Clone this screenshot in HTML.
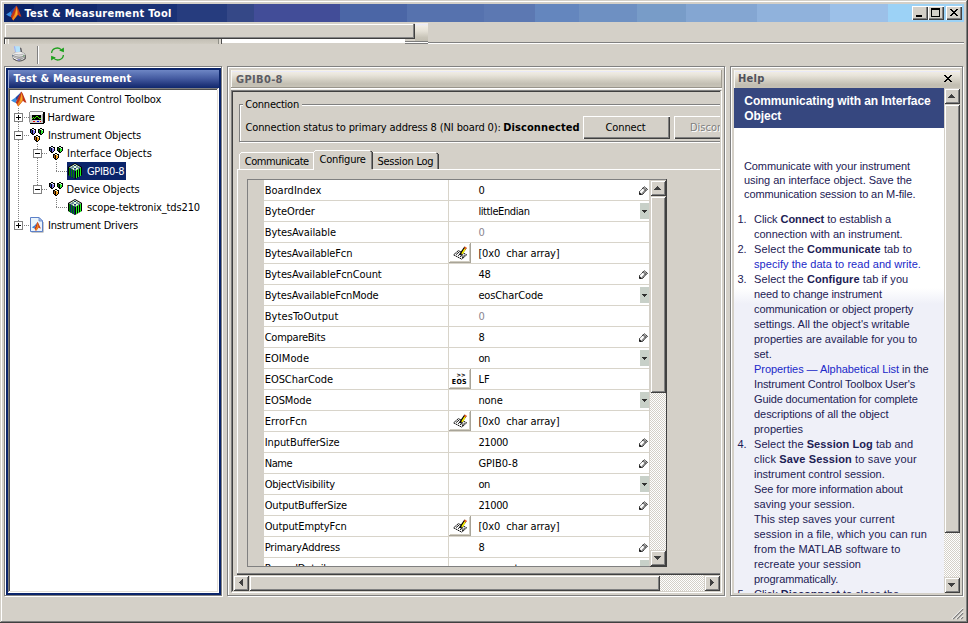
<!DOCTYPE html>
<html><head><meta charset="utf-8"><title>Test &amp; Measurement Tool</title>
<style>
html,body{margin:0;padding:0}
body{width:968px;height:623px;overflow:hidden;background:#d4d0c8;position:relative;font-family:'DejaVu Sans Condensed','Liberation Sans',sans-serif;font-size:11px}
#w{position:absolute;left:0;top:0;width:968px;height:623px;overflow:hidden}
#w div,#w svg{position:absolute;box-sizing:content-box}
#w svg{overflow:visible}
.t{white-space:nowrap}
.t b{font-weight:bold}
</style></head>
<body><div id="w">
<div style="left:0px;top:0px;width:968px;height:623px;background:#d4d0c8;"></div>
<div style="left:1px;top:1px;width:965px;height:1px;background:#ffffff;"></div>
<div style="left:1px;top:1px;width:1px;height:620px;background:#ffffff;"></div>
<div style="left:966px;top:1px;width:1px;height:621px;background:#808080;"></div>
<div style="left:1px;top:621px;width:966px;height:1px;background:#808080;"></div>
<div style="left:967px;top:0px;width:1px;height:623px;background:#404040;"></div>
<div style="left:0px;top:622px;width:968px;height:1px;background:#404040;"></div>
<div style="left:4px;top:4px;width:30px;height:18px;background:#0c2468;"></div>
<div style="left:34px;top:4px;width:63px;height:18px;background:#122a6e;"></div>
<div style="left:97px;top:4px;width:80px;height:18px;background:#1a3276;"></div>
<div style="left:177px;top:4px;width:50px;height:18px;background:#263c7e;"></div>
<div style="left:227px;top:4px;width:27px;height:18px;background:#354887;"></div>
<div style="left:254px;top:4px;width:86px;height:18px;background:#424d98;"></div>
<div style="left:340px;top:4px;width:67px;height:18px;background:#4b66a6;"></div>
<div style="left:407px;top:4px;width:77px;height:18px;background:#5672ae;"></div>
<div style="left:484px;top:4px;width:51px;height:18px;background:#5c78b2;"></div>
<div style="left:535px;top:4px;width:44px;height:18px;background:#6486be;"></div>
<div style="left:579px;top:4px;width:58px;height:18px;background:#6e90c2;"></div>
<div style="left:637px;top:4px;width:49px;height:18px;background:#789cc8;"></div>
<div style="left:686px;top:4px;width:71px;height:18px;background:#84a6d2;"></div>
<div style="left:757px;top:4px;width:73px;height:18px;background:#90b2dc;"></div>
<div style="left:830px;top:4px;width:58px;height:18px;background:#9cc0e8;"></div>
<div style="left:888px;top:4px;width:76px;height:18px;background:#9cd2f6;"></div>
<svg style="left:6px;top:5px" width="16.0" height="16.0" viewBox="0 0 16 16">
<polygon points="0.1,9.4 4.6,6.6 8.6,2.8 10.3,0.8 7.4,7.0 5.8,9.6 4.9,12.0 2.6,11.0" fill="#3a8ee0"/>
<polygon points="4.6,6.6 8.6,2.8 10.3,0.8 7.6,6.6 5.8,9.2" fill="#2c44a0"/>
<polygon points="10.4,0.4 11.7,2.6 15.5,11.7 13.5,11.2 12.0,9.8 9.7,12.6 7.2,15.6 6.0,13.6 4.8,11.6 6.2,8.6 8.2,4.6" fill="#c0341c"/>
<polygon points="10.6,1.2 11.5,5.5 11.8,9.6 9.5,12.6 7.2,15.4 6.2,13.4 8.5,9.6 9.7,5.5" fill="#f08a1c"/>
<polygon points="10.7,3 11.2,6.5 11.0,9.2 8.9,12.2 9.9,8" fill="#f8b030"/>
</svg>
<div class="t" style="left:24.40px;top:6.11px;font-size:11px;line-height:16px;color:#fff;font-weight:bold;letter-spacing:0.300px;font-family:'DejaVu Sans Condensed', 'Liberation Sans', sans-serif;">Test &amp; Measurement Tool</div>
<div style="left:912px;top:6px;width:16px;height:14px;background:#d4d0c8;box-shadow:inset 1px 1px 0 #ffffff,inset -1px -1px 0 #404040,inset -2px -2px 0 #808080"></div>
<div style="left:928px;top:6px;width:16px;height:14px;background:#d4d0c8;box-shadow:inset 1px 1px 0 #ffffff,inset -1px -1px 0 #404040,inset -2px -2px 0 #808080"></div>
<div style="left:946px;top:6px;width:16px;height:14px;background:#d4d0c8;box-shadow:inset 1px 1px 0 #ffffff,inset -1px -1px 0 #404040,inset -2px -2px 0 #808080"></div>
<div style="left:916px;top:15px;width:6px;height:2px;background:#000;"></div>
<div style="left:931px;top:8px;width:7px;height:6px;border:1px solid #000;border-top:2px solid #000"></div>
<svg style="left:950px;top:9px" width="8" height="7" viewBox="0 0 8 7" shape-rendering="crispEdges"><path d="M0,0h2v1h1v1h2v-1h1v-1h2v1h-1v1h-1v1h-1v1h1v1h1v1h1v1h-2v-1h-1v-1h-2v1h-1v1h-2v-1h1v-1h1v-1h1v-1h-1v-1h-1v-1h-1z" fill="#000"/></svg>
<div style="left:5px;top:24px;width:408px;height:1px;background:#ffffff;"></div>
<div style="left:5px;top:24px;width:1px;height:13px;background:#ffffff;"></div>
<div style="left:413px;top:24px;width:1px;height:14px;background:#808080;"></div>
<div style="left:414px;top:24px;width:1px;height:15px;background:#404040;"></div>
<div style="left:4px;top:37px;width:410px;height:1px;background:#868686;"></div>
<div style="left:4px;top:38px;width:411px;height:1px;background:#404040;"></div>
<div style="left:415px;top:23px;width:13px;height:18px;background:;background:linear-gradient(#f6f0e2 0,#eaeaf6 8%,#f0ece4 16%,#e4e0d6 45%,#c8c4b8 80%,#c2beb2 100%)"></div>
<div style="left:4px;top:39px;width:1px;height:5px;background:#404040;"></div>
<div style="left:5px;top:39px;width:1px;height:5px;background:#ffffff;"></div>
<div style="left:8px;top:39px;width:1px;height:5px;background:#f4f2ee;"></div>
<div style="left:9px;top:39px;width:209px;height:5px;background:;background:linear-gradient(#c2beb4,#d0ccc2)"></div>
<div style="left:218px;top:39px;width:1px;height:5px;background:#909088;"></div>
<div style="left:219px;top:39px;width:2px;height:5px;background:#dcd8d0;"></div>
<div style="left:221px;top:39px;width:1px;height:5px;background:#505050;"></div>
<div style="left:222px;top:39px;width:183px;height:4px;background:#ffffff;"></div>
<div style="left:405px;top:41px;width:23px;height:1px;background:#7c7c7c;"></div>
<div style="left:405px;top:42px;width:23px;height:1px;background:#ffffff;"></div>
<div style="left:405px;top:43px;width:23px;height:1px;background:#7c7c7c;"></div>
<div style="left:428px;top:42px;width:536px;height:1px;background:#808080;"></div>
<div style="left:428px;top:43px;width:536px;height:1px;background:#ffffff;"></div>
<svg style="left:12px;top:46px" width="15" height="16" viewBox="0 0 15 16">
<polygon points="8,1.2 9.4,2.4 10.2,6.4 8.6,6.6" fill="#505058"/>
<polygon points="1.8,0.2 7.6,0.2 8.4,5.8 3.2,6.2" fill="#b4e2fc"/>
<polygon points="1.8,0.2 3,0.2 4,6.1 3.2,6.2" fill="#a4acec"/>
<path d="M0.4,9.2 Q0.6,6.6 3,6.2 L9.4,5.8 Q13.4,7 13.8,9.4 L13.8,12.2 Q7.4,17.6 0.4,12.2z" fill="#8c8c8c"/>
<path d="M0.6,8.8 Q1,6.8 3,6.4 L9.2,6 Q12.8,7.2 13,9 Q7.4,12.6 0.6,8.8z" fill="#e2e2e2"/>
<path d="M2.2,8.2 Q7,9.8 11.6,8.2" fill="none" stroke="#a8a8a8" stroke-width="0.8"/>
<path d="M3.4,7.2 L9.6,6.9" fill="none" stroke="#fafafa" stroke-width="0.9"/>
<path d="M0.7,9.6 Q7.4,13.6 12.8,9.8 L12.8,10.8 Q7.4,14.6 0.7,10.6z" fill="#c8c8c8"/>
<path d="M0.9,11 L6.2,13.6 L6.2,14.8 L0.9,12.2z" fill="#f8f8f8"/>
<path d="M8.2,14.2 L12.4,11.6 L12.4,12.6 L8.2,15z" fill="#e4e4e4"/>
<path d="M12.9,9 L13.9,9.6 L13.9,12.4 L12.9,13.2z" fill="#606060"/>
<path d="M1,12.6 Q7.4,17.6 13.4,12.8" fill="none" stroke="#505050" stroke-width="1"/>
<rect x="5.6" y="13.2" width="2.2" height="1.4" fill="#8484d8"/>
<rect x="0.3" y="9.2" width="1" height="1.2" fill="#406080"/>
<rect x="11.2" y="9.4" width="1" height="1" fill="#40a040"/>
</svg>
<div style="left:37px;top:46px;width:1px;height:18px;background:#808080;"></div>
<div style="left:38px;top:46px;width:1px;height:18px;background:#ffffff;"></div>
<svg style="left:50px;top:47px" width="15" height="14" viewBox="0 0 15 14">
<path d="M1.6,6.0 A5.6,5.2 0 0 1 11.2,2.6" fill="none" stroke="#1ea01e" stroke-width="1.3"/>
<polygon points="9.2,3.6 13.9,0.6 13.9,5.3" fill="#1aa01a"/>
<path d="M13.4,8.0 A5.6,5.2 0 0 1 3.8,11.4" fill="none" stroke="#1ea01e" stroke-width="1.3"/>
<polygon points="5.8,10.4 1.1,13.4 1.1,8.7" fill="#1aa01a"/>
</svg>
<div style="left:5px;top:67px;width:216px;height:528px;border:1px solid #ffffff"></div>
<div style="left:4px;top:66px;width:216px;height:528px;border:1px solid #808080"></div>
<div style="left:6px;top:68px;width:215px;height:527px;background:#0a246a;"></div>
<div style="left:8px;top:70px;width:211px;height:18px;background:;background:linear-gradient(#6e86c4 0,#5a72b4 22%,#42589e 50%,#24397e 80%,#10286e 100%)"></div>
<div style="left:8px;top:70px;width:1px;height:18px;background:#9aaad4;"></div>
<div class="t" style="left:13.60px;top:71.11px;font-size:11px;line-height:16px;color:#fff;font-weight:bold;letter-spacing:0.171px;font-family:'DejaVu Sans Condensed', 'Liberation Sans', sans-serif;">Test &amp; Measurement</div>
<div style="left:8px;top:88px;width:211px;height:505px;background:#ffffff;"></div>
<div style="left:8px;top:88px;width:210px;height:1px;background:#808080;"></div>
<div style="left:8px;top:88px;width:1px;height:504px;background:#808080;"></div>
<div style="left:9px;top:89px;width:208px;height:1px;background:#505050;"></div>
<div style="left:9px;top:89px;width:1px;height:502px;background:#505050;"></div>
<div style="left:10px;top:591px;width:208px;height:1px;background:#e4e0d8;"></div>
<div style="left:217px;top:90px;width:1px;height:502px;background:#e4e0d8;"></div>
<div style="left:18px;top:108px;width:1px;height:113px;background-image:linear-gradient(#808080 50%,transparent 0);background-size:1px 2px"></div>
<div style="left:37px;top:144px;width:1px;height:41px;background-image:linear-gradient(#808080 50%,transparent 0);background-size:1px 2px"></div>
<div style="left:56px;top:162px;width:1px;height:10px;background-image:linear-gradient(#808080 50%,transparent 0);background-size:1px 2px"></div>
<div style="left:56px;top:198px;width:1px;height:10px;background-image:linear-gradient(#808080 50%,transparent 0);background-size:1px 2px"></div>
<svg style="left:10.5px;top:90.8px" width="16.0" height="16.0" viewBox="0 0 16 16">
<polygon points="0.1,9.4 4.6,6.6 8.6,2.8 10.3,0.8 7.4,7.0 5.8,9.6 4.9,12.0 2.6,11.0" fill="#3a8ee0"/>
<polygon points="4.6,6.6 8.6,2.8 10.3,0.8 7.6,6.6 5.8,9.2" fill="#2c44a0"/>
<polygon points="10.4,0.4 11.7,2.6 15.5,11.7 13.5,11.2 12.0,9.8 9.7,12.6 7.2,15.6 6.0,13.6 4.8,11.6 6.2,8.6 8.2,4.6" fill="#c0341c"/>
<polygon points="10.6,1.2 11.5,5.5 11.8,9.6 9.5,12.6 7.2,15.4 6.2,13.4 8.5,9.6 9.7,5.5" fill="#f08a1c"/>
<polygon points="10.7,3 11.2,6.5 11.0,9.2 8.9,12.2 9.9,8" fill="#f8b030"/>
</svg>
<div class="t" style="left:29.50px;top:92.11px;font-size:11px;line-height:16px;color:#000;letter-spacing:-0.060px;font-family:'DejaVu Sans Condensed', 'Liberation Sans', sans-serif;">Instrument Control Toolbox</div>
<div style="left:24px;top:117px;width:5px;height:1px;background-image:linear-gradient(90deg,#808080 50%,transparent 0);background-size:2px 1px"></div>
<div style="left:14px;top:113px;width:7px;height:7px;border:1px solid #808080;background:#fff"></div>
<div style="left:16px;top:117px;width:5px;height:1px;background:#000;"></div>
<div style="left:18px;top:115px;width:1px;height:5px;background:#000;"></div>
<svg style="left:29px;top:111px" width="16" height="13" viewBox="0 0 16 13" shape-rendering="crispEdges">
<rect x="1" y="0" width="13" height="1" fill="#909090"/>
<rect x="0" y="1" width="14" height="11" fill="#d0d0d0"/>
<rect x="0" y="1" width="1" height="10" fill="#909090"/>
<rect x="1" y="1" width="13" height="3" fill="#f8f8f8"/>
<rect x="14" y="1" width="2" height="11" fill="#000"/>
<rect x="1" y="12" width="14" height="1" fill="#000"/>
<rect x="13" y="3" width="1" height="8" fill="#a8a8a8"/>
<rect x="3" y="4" width="9" height="5" fill="#000"/>
<rect x="3" y="7" width="1" height="1" fill="#40f000"/><rect x="4" y="6" width="1" height="1" fill="#40f000"/><rect x="5" y="7" width="1" height="1" fill="#40f000"/><rect x="6" y="6" width="1" height="1" fill="#40f000"/><rect x="7" y="5" width="1" height="1" fill="#40f000"/><rect x="8" y="5" width="1" height="1" fill="#40f000"/><rect x="9" y="6" width="1" height="1" fill="#40f000"/><rect x="10" y="7" width="2" height="1" fill="#40f000"/>
<rect x="4" y="10" width="2" height="1" fill="#f00000"/>
<rect x="8" y="10" width="2" height="1" fill="#0000f0"/>
<rect x="11" y="10" width="1" height="1" fill="#f00000"/>
</svg>
<div class="t" style="left:47.50px;top:110.11px;font-size:11px;line-height:16px;color:#000;letter-spacing:-0.071px;font-family:'DejaVu Sans Condensed', 'Liberation Sans', sans-serif;">Hardware</div>
<div style="left:24px;top:135px;width:5px;height:1px;background-image:linear-gradient(90deg,#808080 50%,transparent 0);background-size:2px 1px"></div>
<div style="left:14px;top:131px;width:7px;height:7px;border:1px solid #808080;background:#fff"></div>
<div style="left:16px;top:135px;width:5px;height:1px;background:#000;"></div>
<svg style="left:30px;top:128px" width="14" height="14" viewBox="0 0 14 14" shape-rendering="crispEdges"><polygon points="2,0 4,0 4,1 6,1 6,5 5,5 5,6 4,6 4,7 2,7 2,6 1,6 1,5 0,5 0,1 2,1" fill="#000"/><rect x="2" y="1" width="2" height="1" fill="#e0e8ff"/><rect x="1" y="2" width="1" height="3" fill="#2848a0"/><rect x="3" y="2" width="2" height="2" fill="#8878f0"/><rect x="3" y="4" width="1.5" height="1" fill="#8878f0"/><rect x="3" y="5" width="1" height="1" fill="#8878f0"/><rect x="4" y="2" width="1" height="1" fill="#e0e8ff"/><polygon points="10,0 12,0 12,1 14,1 14,5 13,5 13,6 12,6 12,7 10,7 10,6 9,6 9,5 8,5 8,1 10,1" fill="#000"/><rect x="10" y="1" width="2" height="1" fill="#d8ffd8"/><rect x="9" y="2" width="1" height="3" fill="#087808"/><rect x="11" y="2" width="2" height="2" fill="#30e830"/><rect x="11" y="4" width="1.5" height="1" fill="#30e830"/><rect x="11" y="5" width="1" height="1" fill="#30e830"/><rect x="12" y="2" width="1" height="1" fill="#d8ffd8"/><polygon points="6,7 8,7 8,8 10,8 10,12 9,12 9,13 8,13 8,14 6,14 6,13 5,13 5,12 4,12 4,8 6,8" fill="#000"/><rect x="6" y="8" width="2" height="1" fill="#fff8c0"/><rect x="5" y="9" width="1" height="3" fill="#b06010"/><rect x="7" y="9" width="2" height="2" fill="#f8a020"/><rect x="7" y="11" width="1.5" height="1" fill="#f8a020"/><rect x="7" y="12" width="1" height="1" fill="#f8a020"/><rect x="8" y="9" width="1" height="1" fill="#fff8c0"/></svg>
<div class="t" style="left:48.00px;top:128.11px;font-size:11px;line-height:16px;color:#000;letter-spacing:-0.106px;font-family:'DejaVu Sans Condensed', 'Liberation Sans', sans-serif;">Instrument Objects</div>
<div style="left:42px;top:153px;width:6px;height:1px;background-image:linear-gradient(90deg,#808080 50%,transparent 0);background-size:2px 1px"></div>
<div style="left:33px;top:149px;width:7px;height:7px;border:1px solid #808080;background:#fff"></div>
<div style="left:35px;top:153px;width:5px;height:1px;background:#000;"></div>
<svg style="left:49px;top:146px" width="14" height="14" viewBox="0 0 14 14" shape-rendering="crispEdges"><polygon points="2,0 4,0 4,1 6,1 6,5 5,5 5,6 4,6 4,7 2,7 2,6 1,6 1,5 0,5 0,1 2,1" fill="#000"/><rect x="2" y="1" width="2" height="1" fill="#e0e8ff"/><rect x="1" y="2" width="1" height="3" fill="#2848a0"/><rect x="3" y="2" width="2" height="2" fill="#8878f0"/><rect x="3" y="4" width="1.5" height="1" fill="#8878f0"/><rect x="3" y="5" width="1" height="1" fill="#8878f0"/><rect x="4" y="2" width="1" height="1" fill="#e0e8ff"/><polygon points="10,0 12,0 12,1 14,1 14,5 13,5 13,6 12,6 12,7 10,7 10,6 9,6 9,5 8,5 8,1 10,1" fill="#000"/><rect x="10" y="1" width="2" height="1" fill="#d8ffd8"/><rect x="9" y="2" width="1" height="3" fill="#087808"/><rect x="11" y="2" width="2" height="2" fill="#30e830"/><rect x="11" y="4" width="1.5" height="1" fill="#30e830"/><rect x="11" y="5" width="1" height="1" fill="#30e830"/><rect x="12" y="2" width="1" height="1" fill="#d8ffd8"/><polygon points="6,7 8,7 8,8 10,8 10,12 9,12 9,13 8,13 8,14 6,14 6,13 5,13 5,12 4,12 4,8 6,8" fill="#000"/><rect x="6" y="8" width="2" height="1" fill="#fff8c0"/><rect x="5" y="9" width="1" height="3" fill="#b06010"/><rect x="7" y="9" width="2" height="2" fill="#f8a020"/><rect x="7" y="11" width="1.5" height="1" fill="#f8a020"/><rect x="7" y="12" width="1" height="1" fill="#f8a020"/><rect x="8" y="9" width="1" height="1" fill="#fff8c0"/></svg>
<div class="t" style="left:67.00px;top:146.11px;font-size:11px;line-height:16px;color:#000;font-family:'DejaVu Sans Condensed', 'Liberation Sans', sans-serif;">Interface Objects</div>
<div style="left:56px;top:171px;width:11px;height:1px;background-image:linear-gradient(90deg,#808080 50%,transparent 0);background-size:2px 1px"></div>
<div style="left:67px;top:162px;width:59px;height:18px;background:#0a246a;"></div>
<svg style="left:68px;top:163px" width="14" height="16" viewBox="0 0 14 16"><polygon points="7,0 14,4 14,12 7,16 0,12 0,4" fill="#000"/><polygon points="7,1 13,4.5 7,8 1,4.5" fill="#e4ffd8"/><rect x="6" y="2" width="2" height="1" fill="#103070"/><rect x="4" y="3.5" width="2" height="1" fill="#103070"/><rect x="8" y="3.5" width="2" height="1" fill="#103070"/><rect x="6" y="5" width="2" height="1" fill="#103070"/><rect x="2.5" y="4.5" width="2" height="1" fill="#103070"/><rect x="10" y="4.5" width="2" height="1" fill="#103070"/><rect x="6" y="6.5" width="2" height="1" fill="#103070"/><rect x="1" y="5" width="1" height="8" fill="#008000"/><rect x="3" y="6" width="1" height="8" fill="#008000"/><rect x="5" y="7" width="1" height="8" fill="#008000"/><rect x="8" y="7" width="1" height="8" fill="#20f020"/><rect x="10" y="6" width="1" height="8" fill="#20f020"/><rect x="12" y="5" width="1" height="8" fill="#20f020"/><rect x="2" y="5.5" width="1" height="8" fill="#0a246a"/><rect x="4" y="6.5" width="1" height="8" fill="#0a246a"/><rect x="6" y="7.5" width="1" height="8" fill="#0a246a"/></svg>
<div class="t" style="left:87.00px;top:164.11px;font-size:11px;line-height:16px;color:#fff;letter-spacing:-0.333px;font-family:'DejaVu Sans Condensed', 'Liberation Sans', sans-serif;">GPIB0-8</div>
<div style="left:42px;top:189px;width:6px;height:1px;background-image:linear-gradient(90deg,#808080 50%,transparent 0);background-size:2px 1px"></div>
<div style="left:33px;top:185px;width:7px;height:7px;border:1px solid #808080;background:#fff"></div>
<div style="left:35px;top:189px;width:5px;height:1px;background:#000;"></div>
<svg style="left:49px;top:182px" width="14" height="14" viewBox="0 0 14 14" shape-rendering="crispEdges"><polygon points="2,0 4,0 4,1 6,1 6,5 5,5 5,6 4,6 4,7 2,7 2,6 1,6 1,5 0,5 0,1 2,1" fill="#000"/><rect x="2" y="1" width="2" height="1" fill="#e0e8ff"/><rect x="1" y="2" width="1" height="3" fill="#2848a0"/><rect x="3" y="2" width="2" height="2" fill="#8878f0"/><rect x="3" y="4" width="1.5" height="1" fill="#8878f0"/><rect x="3" y="5" width="1" height="1" fill="#8878f0"/><rect x="4" y="2" width="1" height="1" fill="#e0e8ff"/><polygon points="10,0 12,0 12,1 14,1 14,5 13,5 13,6 12,6 12,7 10,7 10,6 9,6 9,5 8,5 8,1 10,1" fill="#000"/><rect x="10" y="1" width="2" height="1" fill="#d8ffd8"/><rect x="9" y="2" width="1" height="3" fill="#087808"/><rect x="11" y="2" width="2" height="2" fill="#30e830"/><rect x="11" y="4" width="1.5" height="1" fill="#30e830"/><rect x="11" y="5" width="1" height="1" fill="#30e830"/><rect x="12" y="2" width="1" height="1" fill="#d8ffd8"/><polygon points="6,7 8,7 8,8 10,8 10,12 9,12 9,13 8,13 8,14 6,14 6,13 5,13 5,12 4,12 4,8 6,8" fill="#000"/><rect x="6" y="8" width="2" height="1" fill="#fff8c0"/><rect x="5" y="9" width="1" height="3" fill="#b06010"/><rect x="7" y="9" width="2" height="2" fill="#f8a020"/><rect x="7" y="11" width="1.5" height="1" fill="#f8a020"/><rect x="7" y="12" width="1" height="1" fill="#f8a020"/><rect x="8" y="9" width="1" height="1" fill="#fff8c0"/></svg>
<div class="t" style="left:66.50px;top:182.11px;font-size:11px;line-height:16px;color:#000;letter-spacing:-0.092px;font-family:'DejaVu Sans Condensed', 'Liberation Sans', sans-serif;">Device Objects</div>
<div style="left:56px;top:207px;width:11px;height:1px;background-image:linear-gradient(90deg,#808080 50%,transparent 0);background-size:2px 1px"></div>
<svg style="left:68px;top:199px" width="14" height="16" viewBox="0 0 14 16"><polygon points="7,0 14,4 14,12 7,16 0,12 0,4" fill="#000"/><polygon points="7,1 13,4.5 7,8 1,4.5" fill="#e4ffd8"/><rect x="6" y="2" width="2" height="1" fill="#103070"/><rect x="4" y="3.5" width="2" height="1" fill="#103070"/><rect x="8" y="3.5" width="2" height="1" fill="#103070"/><rect x="6" y="5" width="2" height="1" fill="#103070"/><rect x="2.5" y="4.5" width="2" height="1" fill="#103070"/><rect x="10" y="4.5" width="2" height="1" fill="#103070"/><rect x="6" y="6.5" width="2" height="1" fill="#103070"/><rect x="1" y="5" width="1" height="8" fill="#008000"/><rect x="3" y="6" width="1" height="8" fill="#008000"/><rect x="5" y="7" width="1" height="8" fill="#008000"/><rect x="8" y="7" width="1" height="8" fill="#20f020"/><rect x="10" y="6" width="1" height="8" fill="#20f020"/><rect x="12" y="5" width="1" height="8" fill="#20f020"/><rect x="2" y="5.5" width="1" height="8" fill="#0a246a"/><rect x="4" y="6.5" width="1" height="8" fill="#0a246a"/><rect x="6" y="7.5" width="1" height="8" fill="#0a246a"/></svg>
<div class="t" style="left:87.00px;top:200.11px;font-size:11px;line-height:16px;color:#000;letter-spacing:-0.143px;font-family:'DejaVu Sans Condensed', 'Liberation Sans', sans-serif;">scope-tektronix_tds210</div>
<div style="left:24px;top:225px;width:5px;height:1px;background-image:linear-gradient(90deg,#808080 50%,transparent 0);background-size:2px 1px"></div>
<div style="left:14px;top:221px;width:7px;height:7px;border:1px solid #808080;background:#fff"></div>
<div style="left:16px;top:225px;width:5px;height:1px;background:#000;"></div>
<div style="left:18px;top:223px;width:1px;height:5px;background:#000;"></div>
<svg style="left:30px;top:217px" width="14" height="16" viewBox="0 0 14 16">
<polygon points="1.5,1.5 9.5,1.5 13.5,5.5 13.5,15.5 1.5,15.5" fill="#909090"/>
<polygon points="0.5,0.5 9,0.5 12.5,4 12.5,14.5 0.5,14.5" fill="#eaf4fc" stroke="#5c80c8" stroke-width="1"/>
<polygon points="9,0.5 9,4 12.5,4" fill="#b8c8e8" stroke="#5c80c8" stroke-width="0.8"/>
<g transform="translate(1.6,4.6) scale(0.6)">
<polygon points="0.3,9.6 4.6,6.8 8.4,2.8 9.8,0.8 7.2,7.0 5.6,9.4 4.8,11.6" fill="#2f7fd8"/>
<polygon points="9.9,0.4 11.3,2.6 15.4,11.7 13.4,11.2 11.9,9.8 9.6,12.6 7.2,15.6 6.0,13.6 4.8,11.6 6.2,8.6 8.0,4.6" fill="#c0341c"/>
<polygon points="10.1,1.2 11.2,5.5 11.6,9.6 9.4,12.6 7.2,15.4 6.2,13.4 8.4,9.6 9.4,5.5" fill="#f08a1c"/>
</g></svg>
<div class="t" style="left:48.00px;top:218.11px;font-size:11px;line-height:16px;color:#000;letter-spacing:-0.176px;font-family:'DejaVu Sans Condensed', 'Liberation Sans', sans-serif;">Instrument Drivers</div>
<div style="left:228px;top:67px;width:496px;height:528px;border:1px solid #ffffff"></div>
<div style="left:227px;top:66px;width:496px;height:528px;border:1px solid #808080"></div>
<div style="left:231px;top:70px;width:491px;height:17px;background:;background:linear-gradient(#f6f2e6 0,#f6f2e6 5.5%,#e9e9f7 5.6%,#e9e9f7 11%,#f0ece4 11.1%,#e8e4da 30%,#d2cec2 60%,#c2beb2 82%,#c8c4b8 100%)"></div>
<div style="left:231px;top:70px;width:1px;height:17px;background:#f8f8f4;"></div>
<div style="left:721px;top:70px;width:1px;height:18px;background:#a09c90;"></div>
<div style="left:231px;top:87px;width:491px;height:1px;background:#98948a;"></div>
<div style="left:231px;top:88px;width:491px;height:1px;background:#ffffff;"></div>
<div style="left:231px;top:89px;width:491px;height:1px;background:#eceae4;"></div>
<div class="t" style="left:236.00px;top:72.11px;font-size:11px;line-height:16px;color:#5c5c64;font-weight:bold;letter-spacing:0.333px;font-family:'DejaVu Sans Condensed', 'Liberation Sans', sans-serif;">GPIB0-8</div>
<div style="left:231px;top:90px;width:490px;height:1px;background:#808080;"></div>
<div style="left:231px;top:90px;width:1px;height:502px;background:#808080;"></div>
<div style="left:232px;top:91px;width:488px;height:1px;background:#404040;"></div>
<div style="left:232px;top:91px;width:1px;height:500px;background:#404040;"></div>
<div style="left:232px;top:592px;width:490px;height:1px;background:#ffffff;"></div>
<div style="left:721px;top:91px;width:1px;height:502px;background:#ffffff;"></div>
<div style="left:0;top:0;width:968px;height:623px;clip-path:inset(92px 248px 32px 233px)">
<div style="left:240px;top:105px;width:560px;height:36px;border:1px solid #ffffff"></div>
<div style="left:239px;top:104px;width:560px;height:36px;border:1px solid #808080"></div>
<div style="left:243px;top:103px;width:59px;height:4px;background:#d4d0c8;"></div>
<div class="t" style="left:245.30px;top:97.11px;font-size:11px;line-height:16px;color:#000;letter-spacing:-0.233px;font-family:'DejaVu Sans Condensed', 'Liberation Sans', sans-serif;">Connection</div>
<div class="t" style="left:245.50px;top:120.11px;font-size:11px;line-height:16px;color:#000;letter-spacing:-0.122px;font-family:'DejaVu Sans Condensed', 'Liberation Sans', sans-serif;">Connection status to primary address 8 (NI board 0):</div>
<div class="t" style="left:503.20px;top:120.11px;font-size:11px;line-height:16px;color:#000;font-weight:bold;letter-spacing:0.100px;font-family:'DejaVu Sans Condensed', 'Liberation Sans', sans-serif;">Disconnected</div>
<div style="left:583px;top:116px;width:87px;height:23px;background:#d4d0c8;box-shadow:inset 1px 1px 0 #ffffff,inset -1px -1px 0 #404040,inset -2px -2px 0 #808080"></div>
<div class="t" style="left:605.60px;top:120.11px;font-size:11px;line-height:16px;color:#000;letter-spacing:-0.133px;font-family:'DejaVu Sans Condensed', 'Liberation Sans', sans-serif;">Connect</div>
<div style="left:674px;top:116px;width:87px;height:23px;background:#d4d0c8;box-shadow:inset 1px 1px 0 #ffffff,inset -1px -1px 0 #404040,inset -2px -2px 0 #808080"></div>
<div class="t" style="left:674.00px;top:120.11px;font-size:11px;line-height:16px;color:#808080;font-family:'DejaVu Sans Condensed', 'Liberation Sans', sans-serif;width:87px;text-align:center;text-shadow:1px 1px 0 #fff;">Disconnect</div>
<div style="left:237px;top:169px;width:524px;height:1px;background:#ffffff;"></div>
<div style="left:237px;top:169px;width:1px;height:404px;background:#ffffff;"></div>
<div style="left:237px;top:573px;width:524px;height:1px;background:#808080;"></div>
<div style="left:237px;top:574px;width:524px;height:1px;background:#404040;"></div>
<div style="left:241px;top:152px;width:72px;height:1px;background:#ffffff;"></div>
<div style="left:239px;top:154px;width:1px;height:15px;background:#ffffff;"></div>
<div style="left:240px;top:153px;width:1px;height:1px;background:#ffffff;"></div>
<div class="t" style="left:244.70px;top:154.11px;font-size:11px;line-height:16px;color:#000;letter-spacing:-0.450px;font-family:'DejaVu Sans Condensed', 'Liberation Sans', sans-serif;">Communicate</div>
<div style="left:373px;top:152px;width:63px;height:1px;background:#ffffff;"></div>
<div style="left:437px;top:154px;width:1px;height:15px;background:#808080;"></div>
<div style="left:438px;top:154px;width:1px;height:15px;background:#404040;"></div>
<div style="left:436px;top:153px;width:1px;height:1px;background:#808080;"></div>
<div style="left:437px;top:153px;width:1px;height:1px;background:#404040;"></div>
<div class="t" style="left:377.40px;top:154.11px;font-size:11px;line-height:16px;color:#000;letter-spacing:-0.240px;font-family:'DejaVu Sans Condensed', 'Liberation Sans', sans-serif;">Session Log</div>
<div style="left:313px;top:150px;width:60px;height:20px;background:#d4d0c8;"></div>
<div style="left:315px;top:150px;width:55px;height:1px;background:#ffffff;"></div>
<div style="left:313px;top:152px;width:1px;height:18px;background:#ffffff;"></div>
<div style="left:314px;top:151px;width:1px;height:1px;background:#ffffff;"></div>
<div style="left:371px;top:152px;width:1px;height:17px;background:#808080;"></div>
<div style="left:372px;top:152px;width:1px;height:17px;background:#404040;"></div>
<div style="left:370px;top:151px;width:1px;height:1px;background:#808080;"></div>
<div style="left:371px;top:151px;width:1px;height:1px;background:#404040;"></div>
<div class="t" style="left:319.50px;top:152.11px;font-size:11px;line-height:16px;color:#000;letter-spacing:-0.188px;font-family:'DejaVu Sans Condensed', 'Liberation Sans', sans-serif;">Configure</div>
<div style="left:248px;top:180px;width:16px;height:386px;background:#d4d0c8;"></div>
<div style="left:264px;top:180px;width:386px;height:386px;background:#ffffff;"></div>
<div style="left:247px;top:179px;width:420px;height:1px;background:#808080;"></div>
<div style="left:247px;top:179px;width:1px;height:388px;background:#808080;"></div>
<div style="left:247px;top:566px;width:420px;height:1px;background:#808080;"></div>
<div style="left:448px;top:180px;width:1px;height:386px;background:#d8d4ca;"></div>
<div style="left:649px;top:180px;width:1px;height:386px;background:#d4d0c8;"></div>
<div style="left:0;top:0;width:968px;height:623px;clip-path:inset(180px 302px 57px 248px)">
<div style="left:264px;top:200px;width:385px;height:1px;background:#d8d4ca;"></div>
<div class="t" style="left:264.70px;top:183.11px;font-size:11px;line-height:16px;color:#000;letter-spacing:0.033px;font-family:'DejaVu Sans Condensed', 'Liberation Sans', sans-serif;">BoardIndex</div>
<div class="t" style="left:478.40px;top:183.11px;font-size:11px;line-height:16px;color:#000;letter-spacing:0.100px;font-family:'DejaVu Sans Condensed', 'Liberation Sans', sans-serif;">0</div>
<svg style="left:639px;top:186px" width="9" height="9" viewBox="0 0 9 9">
<polygon points="0.4,5.4 5.4,0.5 8.6,3.3 3.6,8.6 0.4,8.6" fill="#fff"/>
<polygon points="3.4,8.6 8.6,3.3 7.2,2.1 2.2,7.4" fill="#8e8e8e"/>
<polygon points="5.4,0.5 8.6,3.3 7.5,4.4 4.3,1.6" fill="#b4b4b4"/>
<path d="M0.5,5.6 L5.4,0.6 L8.5,3.3 L3.5,8.5 L0.5,8.5z" fill="none" stroke="#1a1a1a" stroke-width="0.9" stroke-dasharray="1.3 0.5"/>
<polygon points="0.2,5.4 0.2,8.8 3.6,8.8 2.4,8 1,6.6" fill="#111"/>
<rect x="4.6" y="2.4" width="1" height="1" fill="#111"/><rect x="5.6" y="3.4" width="1" height="1" fill="#111"/><rect x="3.6" y="1.6" width="1" height="1" fill="#111"/>
</svg>
<div style="left:264px;top:221px;width:385px;height:1px;background:#d8d4ca;"></div>
<div class="t" style="left:264.70px;top:204.11px;font-size:11px;line-height:16px;color:#000;letter-spacing:-0.062px;font-family:'DejaVu Sans Condensed', 'Liberation Sans', sans-serif;">ByteOrder</div>
<div class="t" style="left:478.40px;top:204.11px;font-size:11px;line-height:16px;color:#000;letter-spacing:-0.400px;font-family:'DejaVu Sans Condensed', 'Liberation Sans', sans-serif;">littleEndian</div>
<div style="left:640px;top:203px;width:9px;height:16px;background:#c8d0c8;"></div>
<svg style="left:642px;top:210px" width="5" height="3" viewBox="0 0 5 3" shape-rendering="crispEdges"><polygon points="0,0 5,0 2.5,3" fill="#303030"/></svg>
<div style="left:264px;top:242px;width:385px;height:1px;background:#d8d4ca;"></div>
<div class="t" style="left:264.70px;top:225.11px;font-size:11px;line-height:16px;color:#000;letter-spacing:-0.092px;font-family:'DejaVu Sans Condensed', 'Liberation Sans', sans-serif;">BytesAvailable</div>
<div class="t" style="left:478.40px;top:225.11px;font-size:11px;line-height:16px;color:#8a8690;letter-spacing:0.100px;font-family:'DejaVu Sans Condensed', 'Liberation Sans', sans-serif;">0</div>
<div style="left:264px;top:263px;width:385px;height:1px;background:#d8d4ca;"></div>
<div class="t" style="left:264.70px;top:246.11px;font-size:11px;line-height:16px;color:#000;letter-spacing:-0.137px;font-family:'DejaVu Sans Condensed', 'Liberation Sans', sans-serif;">BytesAvailableFcn</div>
<div class="t" style="left:478.40px;top:246.11px;font-size:11px;line-height:16px;color:#000;letter-spacing:-0.131px;font-family:'DejaVu Sans Condensed', 'Liberation Sans', sans-serif;">[0x0&nbsp; char array]</div>
<div style="left:449px;top:243px;width:22px;height:20px;background:#ffffff;"></div>
<div style="left:470px;top:243px;width:1px;height:20px;background:#a8a498;"></div>
<div style="left:469px;top:244px;width:1px;height:18px;background:#d0ccc0;"></div>
<div style="left:449px;top:262px;width:22px;height:1px;background:#a8a498;"></div>
<div style="left:450px;top:261px;width:20px;height:1px;background:#d0ccc0;"></div>
<svg style="left:453px;top:246px" width="15" height="14" viewBox="0 0 15 14">
<polygon points="0.6,8.8 5.4,4.6 13.6,8.8 8.8,13.2" fill="#fff" stroke="#000" stroke-width="1" stroke-dasharray="1.6 0.5"/>
<path d="M3,8.6 L6.4,5.8 M5,9.8 L8.2,7 M7,11 L10.2,8.2 M9,12 L12,9.4" stroke="#000" stroke-width="0.9"/>
<polygon points="7.2,9.6 6.8,7.2 11.4,0.6 13.6,2.2 9,8.6" fill="#000"/>
<polygon points="8.2,7.6 11.3,2.6 12.7,3.6 9.6,8.2" fill="#f8f000"/>
<polygon points="11,2.2 12,0.6 13.8,1.8 12.8,3.4" fill="#f86820"/>
<polygon points="9.4,9.2 12.2,9.8 10.4,11.6 8.4,10.6" fill="#808080"/>
</svg>
<div style="left:264px;top:284px;width:385px;height:1px;background:#d8d4ca;"></div>
<div class="t" style="left:264.70px;top:267.11px;font-size:11px;line-height:16px;color:#000;letter-spacing:-0.110px;font-family:'DejaVu Sans Condensed', 'Liberation Sans', sans-serif;">BytesAvailableFcnCount</div>
<div class="t" style="left:478.40px;top:267.11px;font-size:11px;line-height:16px;color:#000;letter-spacing:-0.100px;font-family:'DejaVu Sans Condensed', 'Liberation Sans', sans-serif;">48</div>
<svg style="left:639px;top:270px" width="9" height="9" viewBox="0 0 9 9">
<polygon points="0.4,5.4 5.4,0.5 8.6,3.3 3.6,8.6 0.4,8.6" fill="#fff"/>
<polygon points="3.4,8.6 8.6,3.3 7.2,2.1 2.2,7.4" fill="#8e8e8e"/>
<polygon points="5.4,0.5 8.6,3.3 7.5,4.4 4.3,1.6" fill="#b4b4b4"/>
<path d="M0.5,5.6 L5.4,0.6 L8.5,3.3 L3.5,8.5 L0.5,8.5z" fill="none" stroke="#1a1a1a" stroke-width="0.9" stroke-dasharray="1.3 0.5"/>
<polygon points="0.2,5.4 0.2,8.8 3.6,8.8 2.4,8 1,6.6" fill="#111"/>
<rect x="4.6" y="2.4" width="1" height="1" fill="#111"/><rect x="5.6" y="3.4" width="1" height="1" fill="#111"/><rect x="3.6" y="1.6" width="1" height="1" fill="#111"/>
</svg>
<div style="left:264px;top:305px;width:385px;height:1px;background:#d8d4ca;"></div>
<div class="t" style="left:264.70px;top:288.11px;font-size:11px;line-height:16px;color:#000;letter-spacing:-0.145px;font-family:'DejaVu Sans Condensed', 'Liberation Sans', sans-serif;">BytesAvailableFcnMode</div>
<div class="t" style="left:478.40px;top:288.11px;font-size:11px;line-height:16px;color:#000;letter-spacing:-0.120px;font-family:'DejaVu Sans Condensed', 'Liberation Sans', sans-serif;">eosCharCode</div>
<div style="left:640px;top:287px;width:9px;height:16px;background:#c8d0c8;"></div>
<svg style="left:642px;top:294px" width="5" height="3" viewBox="0 0 5 3" shape-rendering="crispEdges"><polygon points="0,0 5,0 2.5,3" fill="#303030"/></svg>
<div style="left:264px;top:326px;width:385px;height:1px;background:#d8d4ca;"></div>
<div class="t" style="left:264.70px;top:309.11px;font-size:11px;line-height:16px;color:#000;letter-spacing:0.108px;font-family:'DejaVu Sans Condensed', 'Liberation Sans', sans-serif;">BytesToOutput</div>
<div class="t" style="left:478.40px;top:309.11px;font-size:11px;line-height:16px;color:#8a8690;letter-spacing:0.100px;font-family:'DejaVu Sans Condensed', 'Liberation Sans', sans-serif;">0</div>
<div style="left:264px;top:347px;width:385px;height:1px;background:#d8d4ca;"></div>
<div class="t" style="left:264.70px;top:330.11px;font-size:11px;line-height:16px;color:#000;letter-spacing:-0.250px;font-family:'DejaVu Sans Condensed', 'Liberation Sans', sans-serif;">CompareBits</div>
<div class="t" style="left:478.40px;top:330.11px;font-size:11px;line-height:16px;color:#000;letter-spacing:0.100px;font-family:'DejaVu Sans Condensed', 'Liberation Sans', sans-serif;">8</div>
<svg style="left:639px;top:333px" width="9" height="9" viewBox="0 0 9 9">
<polygon points="0.4,5.4 5.4,0.5 8.6,3.3 3.6,8.6 0.4,8.6" fill="#fff"/>
<polygon points="3.4,8.6 8.6,3.3 7.2,2.1 2.2,7.4" fill="#8e8e8e"/>
<polygon points="5.4,0.5 8.6,3.3 7.5,4.4 4.3,1.6" fill="#b4b4b4"/>
<path d="M0.5,5.6 L5.4,0.6 L8.5,3.3 L3.5,8.5 L0.5,8.5z" fill="none" stroke="#1a1a1a" stroke-width="0.9" stroke-dasharray="1.3 0.5"/>
<polygon points="0.2,5.4 0.2,8.8 3.6,8.8 2.4,8 1,6.6" fill="#111"/>
<rect x="4.6" y="2.4" width="1" height="1" fill="#111"/><rect x="5.6" y="3.4" width="1" height="1" fill="#111"/><rect x="3.6" y="1.6" width="1" height="1" fill="#111"/>
</svg>
<div style="left:264px;top:368px;width:385px;height:1px;background:#d8d4ca;"></div>
<div class="t" style="left:264.70px;top:351.11px;font-size:11px;line-height:16px;color:#000;letter-spacing:0.067px;font-family:'DejaVu Sans Condensed', 'Liberation Sans', sans-serif;">EOIMode</div>
<div class="t" style="left:478.40px;top:351.11px;font-size:11px;line-height:16px;color:#000;letter-spacing:-0.400px;font-family:'DejaVu Sans Condensed', 'Liberation Sans', sans-serif;">on</div>
<div style="left:640px;top:350px;width:9px;height:16px;background:#c8d0c8;"></div>
<svg style="left:642px;top:357px" width="5" height="3" viewBox="0 0 5 3" shape-rendering="crispEdges"><polygon points="0,0 5,0 2.5,3" fill="#303030"/></svg>
<div style="left:264px;top:389px;width:385px;height:1px;background:#d8d4ca;"></div>
<div class="t" style="left:264.70px;top:372.11px;font-size:11px;line-height:16px;color:#000;letter-spacing:-0.050px;font-family:'DejaVu Sans Condensed', 'Liberation Sans', sans-serif;">EOSCharCode</div>
<div class="t" style="left:478.40px;top:372.11px;font-size:11px;line-height:16px;color:#000;letter-spacing:0.200px;font-family:'DejaVu Sans Condensed', 'Liberation Sans', sans-serif;">LF</div>
<div style="left:449px;top:369px;width:22px;height:20px;background:#ffffff;"></div>
<div style="left:470px;top:369px;width:1px;height:20px;background:#a8a498;"></div>
<div style="left:469px;top:370px;width:1px;height:18px;background:#d0ccc0;"></div>
<div style="left:449px;top:388px;width:22px;height:1px;background:#a8a498;"></div>
<div style="left:450px;top:387px;width:20px;height:1px;background:#d0ccc0;"></div>
<div class="t" style="left:456.40px;top:366.80px;font-size:6px;line-height:16px;color:#000;font-weight:bold;font-family:'DejaVu Sans Condensed', 'Liberation Sans', sans-serif;">&gt;&gt;</div>
<div class="t" style="left:451.80px;top:373.78px;font-size:7px;line-height:16px;color:#000;font-weight:bold;letter-spacing:0.300px;font-family:'DejaVu Sans Condensed', 'Liberation Sans', sans-serif;">EOS</div>
<div style="left:264px;top:410px;width:385px;height:1px;background:#d8d4ca;"></div>
<div class="t" style="left:264.70px;top:393.11px;font-size:11px;line-height:16px;color:#000;letter-spacing:-0.050px;font-family:'DejaVu Sans Condensed', 'Liberation Sans', sans-serif;">EOSMode</div>
<div class="t" style="left:478.40px;top:393.11px;font-size:11px;line-height:16px;color:#000;letter-spacing:-0.100px;font-family:'DejaVu Sans Condensed', 'Liberation Sans', sans-serif;">none</div>
<div style="left:640px;top:392px;width:9px;height:16px;background:#c8d0c8;"></div>
<svg style="left:642px;top:399px" width="5" height="3" viewBox="0 0 5 3" shape-rendering="crispEdges"><polygon points="0,0 5,0 2.5,3" fill="#303030"/></svg>
<div style="left:264px;top:431px;width:385px;height:1px;background:#d8d4ca;"></div>
<div class="t" style="left:264.70px;top:414.11px;font-size:11px;line-height:16px;color:#000;letter-spacing:0.129px;font-family:'DejaVu Sans Condensed', 'Liberation Sans', sans-serif;">ErrorFcn</div>
<div class="t" style="left:478.40px;top:414.11px;font-size:11px;line-height:16px;color:#000;letter-spacing:-0.131px;font-family:'DejaVu Sans Condensed', 'Liberation Sans', sans-serif;">[0x0&nbsp; char array]</div>
<div style="left:449px;top:411px;width:22px;height:20px;background:#ffffff;"></div>
<div style="left:470px;top:411px;width:1px;height:20px;background:#a8a498;"></div>
<div style="left:469px;top:412px;width:1px;height:18px;background:#d0ccc0;"></div>
<div style="left:449px;top:430px;width:22px;height:1px;background:#a8a498;"></div>
<div style="left:450px;top:429px;width:20px;height:1px;background:#d0ccc0;"></div>
<svg style="left:453px;top:414px" width="15" height="14" viewBox="0 0 15 14">
<polygon points="0.6,8.8 5.4,4.6 13.6,8.8 8.8,13.2" fill="#fff" stroke="#000" stroke-width="1" stroke-dasharray="1.6 0.5"/>
<path d="M3,8.6 L6.4,5.8 M5,9.8 L8.2,7 M7,11 L10.2,8.2 M9,12 L12,9.4" stroke="#000" stroke-width="0.9"/>
<polygon points="7.2,9.6 6.8,7.2 11.4,0.6 13.6,2.2 9,8.6" fill="#000"/>
<polygon points="8.2,7.6 11.3,2.6 12.7,3.6 9.6,8.2" fill="#f8f000"/>
<polygon points="11,2.2 12,0.6 13.8,1.8 12.8,3.4" fill="#f86820"/>
<polygon points="9.4,9.2 12.2,9.8 10.4,11.6 8.4,10.6" fill="#808080"/>
</svg>
<div style="left:264px;top:452px;width:385px;height:1px;background:#d8d4ca;"></div>
<div class="t" style="left:264.70px;top:435.11px;font-size:11px;line-height:16px;color:#000;letter-spacing:-0.079px;font-family:'DejaVu Sans Condensed', 'Liberation Sans', sans-serif;">InputBufferSize</div>
<div class="t" style="left:478.40px;top:435.11px;font-size:11px;line-height:16px;color:#000;letter-spacing:-0.375px;font-family:'DejaVu Sans Condensed', 'Liberation Sans', sans-serif;">21000</div>
<svg style="left:639px;top:438px" width="9" height="9" viewBox="0 0 9 9">
<polygon points="0.4,5.4 5.4,0.5 8.6,3.3 3.6,8.6 0.4,8.6" fill="#fff"/>
<polygon points="3.4,8.6 8.6,3.3 7.2,2.1 2.2,7.4" fill="#8e8e8e"/>
<polygon points="5.4,0.5 8.6,3.3 7.5,4.4 4.3,1.6" fill="#b4b4b4"/>
<path d="M0.5,5.6 L5.4,0.6 L8.5,3.3 L3.5,8.5 L0.5,8.5z" fill="none" stroke="#1a1a1a" stroke-width="0.9" stroke-dasharray="1.3 0.5"/>
<polygon points="0.2,5.4 0.2,8.8 3.6,8.8 2.4,8 1,6.6" fill="#111"/>
<rect x="4.6" y="2.4" width="1" height="1" fill="#111"/><rect x="5.6" y="3.4" width="1" height="1" fill="#111"/><rect x="3.6" y="1.6" width="1" height="1" fill="#111"/>
</svg>
<div style="left:264px;top:473px;width:385px;height:1px;background:#d8d4ca;"></div>
<div class="t" style="left:264.70px;top:456.11px;font-size:11px;line-height:16px;color:#000;letter-spacing:-0.450px;font-family:'DejaVu Sans Condensed', 'Liberation Sans', sans-serif;">Name</div>
<div class="t" style="left:478.40px;top:456.11px;font-size:11px;line-height:16px;color:#000;letter-spacing:0.017px;font-family:'DejaVu Sans Condensed', 'Liberation Sans', sans-serif;">GPIB0-8</div>
<svg style="left:639px;top:459px" width="9" height="9" viewBox="0 0 9 9">
<polygon points="0.4,5.4 5.4,0.5 8.6,3.3 3.6,8.6 0.4,8.6" fill="#fff"/>
<polygon points="3.4,8.6 8.6,3.3 7.2,2.1 2.2,7.4" fill="#8e8e8e"/>
<polygon points="5.4,0.5 8.6,3.3 7.5,4.4 4.3,1.6" fill="#b4b4b4"/>
<path d="M0.5,5.6 L5.4,0.6 L8.5,3.3 L3.5,8.5 L0.5,8.5z" fill="none" stroke="#1a1a1a" stroke-width="0.9" stroke-dasharray="1.3 0.5"/>
<polygon points="0.2,5.4 0.2,8.8 3.6,8.8 2.4,8 1,6.6" fill="#111"/>
<rect x="4.6" y="2.4" width="1" height="1" fill="#111"/><rect x="5.6" y="3.4" width="1" height="1" fill="#111"/><rect x="3.6" y="1.6" width="1" height="1" fill="#111"/>
</svg>
<div style="left:264px;top:494px;width:385px;height:1px;background:#d8d4ca;"></div>
<div class="t" style="left:264.70px;top:477.11px;font-size:11px;line-height:16px;color:#000;letter-spacing:-0.213px;font-family:'DejaVu Sans Condensed', 'Liberation Sans', sans-serif;">ObjectVisibility</div>
<div class="t" style="left:478.40px;top:477.11px;font-size:11px;line-height:16px;color:#000;letter-spacing:-0.400px;font-family:'DejaVu Sans Condensed', 'Liberation Sans', sans-serif;">on</div>
<div style="left:640px;top:476px;width:9px;height:16px;background:#c8d0c8;"></div>
<svg style="left:642px;top:483px" width="5" height="3" viewBox="0 0 5 3" shape-rendering="crispEdges"><polygon points="0,0 5,0 2.5,3" fill="#303030"/></svg>
<div style="left:264px;top:515px;width:385px;height:1px;background:#d8d4ca;"></div>
<div class="t" style="left:264.70px;top:498.11px;font-size:11px;line-height:16px;color:#000;letter-spacing:-0.160px;font-family:'DejaVu Sans Condensed', 'Liberation Sans', sans-serif;">OutputBufferSize</div>
<div class="t" style="left:478.40px;top:498.11px;font-size:11px;line-height:16px;color:#000;letter-spacing:-0.375px;font-family:'DejaVu Sans Condensed', 'Liberation Sans', sans-serif;">21000</div>
<svg style="left:639px;top:501px" width="9" height="9" viewBox="0 0 9 9">
<polygon points="0.4,5.4 5.4,0.5 8.6,3.3 3.6,8.6 0.4,8.6" fill="#fff"/>
<polygon points="3.4,8.6 8.6,3.3 7.2,2.1 2.2,7.4" fill="#8e8e8e"/>
<polygon points="5.4,0.5 8.6,3.3 7.5,4.4 4.3,1.6" fill="#b4b4b4"/>
<path d="M0.5,5.6 L5.4,0.6 L8.5,3.3 L3.5,8.5 L0.5,8.5z" fill="none" stroke="#1a1a1a" stroke-width="0.9" stroke-dasharray="1.3 0.5"/>
<polygon points="0.2,5.4 0.2,8.8 3.6,8.8 2.4,8 1,6.6" fill="#111"/>
<rect x="4.6" y="2.4" width="1" height="1" fill="#111"/><rect x="5.6" y="3.4" width="1" height="1" fill="#111"/><rect x="3.6" y="1.6" width="1" height="1" fill="#111"/>
</svg>
<div style="left:264px;top:536px;width:385px;height:1px;background:#d8d4ca;"></div>
<div class="t" style="left:264.70px;top:519.11px;font-size:11px;line-height:16px;color:#000;letter-spacing:-0.131px;font-family:'DejaVu Sans Condensed', 'Liberation Sans', sans-serif;">OutputEmptyFcn</div>
<div class="t" style="left:478.40px;top:519.11px;font-size:11px;line-height:16px;color:#000;letter-spacing:-0.131px;font-family:'DejaVu Sans Condensed', 'Liberation Sans', sans-serif;">[0x0&nbsp; char array]</div>
<div style="left:449px;top:516px;width:22px;height:20px;background:#ffffff;"></div>
<div style="left:470px;top:516px;width:1px;height:20px;background:#a8a498;"></div>
<div style="left:469px;top:517px;width:1px;height:18px;background:#d0ccc0;"></div>
<div style="left:449px;top:535px;width:22px;height:1px;background:#a8a498;"></div>
<div style="left:450px;top:534px;width:20px;height:1px;background:#d0ccc0;"></div>
<svg style="left:453px;top:519px" width="15" height="14" viewBox="0 0 15 14">
<polygon points="0.6,8.8 5.4,4.6 13.6,8.8 8.8,13.2" fill="#fff" stroke="#000" stroke-width="1" stroke-dasharray="1.6 0.5"/>
<path d="M3,8.6 L6.4,5.8 M5,9.8 L8.2,7 M7,11 L10.2,8.2 M9,12 L12,9.4" stroke="#000" stroke-width="0.9"/>
<polygon points="7.2,9.6 6.8,7.2 11.4,0.6 13.6,2.2 9,8.6" fill="#000"/>
<polygon points="8.2,7.6 11.3,2.6 12.7,3.6 9.6,8.2" fill="#f8f000"/>
<polygon points="11,2.2 12,0.6 13.8,1.8 12.8,3.4" fill="#f86820"/>
<polygon points="9.4,9.2 12.2,9.8 10.4,11.6 8.4,10.6" fill="#808080"/>
</svg>
<div style="left:264px;top:557px;width:385px;height:1px;background:#d8d4ca;"></div>
<div class="t" style="left:264.70px;top:540.11px;font-size:11px;line-height:16px;color:#000;letter-spacing:-0.162px;font-family:'DejaVu Sans Condensed', 'Liberation Sans', sans-serif;">PrimaryAddress</div>
<div class="t" style="left:478.40px;top:540.11px;font-size:11px;line-height:16px;color:#000;letter-spacing:0.100px;font-family:'DejaVu Sans Condensed', 'Liberation Sans', sans-serif;">8</div>
<svg style="left:639px;top:543px" width="9" height="9" viewBox="0 0 9 9">
<polygon points="0.4,5.4 5.4,0.5 8.6,3.3 3.6,8.6 0.4,8.6" fill="#fff"/>
<polygon points="3.4,8.6 8.6,3.3 7.2,2.1 2.2,7.4" fill="#8e8e8e"/>
<polygon points="5.4,0.5 8.6,3.3 7.5,4.4 4.3,1.6" fill="#b4b4b4"/>
<path d="M0.5,5.6 L5.4,0.6 L8.5,3.3 L3.5,8.5 L0.5,8.5z" fill="none" stroke="#1a1a1a" stroke-width="0.9" stroke-dasharray="1.3 0.5"/>
<polygon points="0.2,5.4 0.2,8.8 3.6,8.8 2.4,8 1,6.6" fill="#111"/>
<rect x="4.6" y="2.4" width="1" height="1" fill="#111"/><rect x="5.6" y="3.4" width="1" height="1" fill="#111"/><rect x="3.6" y="1.6" width="1" height="1" fill="#111"/>
</svg>
<div style="left:264px;top:578px;width:385px;height:1px;background:#d8d4ca;"></div>
<div class="t" style="left:264.70px;top:561.11px;font-size:11px;line-height:16px;color:#000;letter-spacing:-0.173px;font-family:'DejaVu Sans Condensed', 'Liberation Sans', sans-serif;">RecordDetail</div>
<div class="t" style="left:478.40px;top:561.11px;font-size:11px;line-height:16px;color:#000;letter-spacing:-0.450px;font-family:'DejaVu Sans Condensed', 'Liberation Sans', sans-serif;">compact</div>
<div style="left:640px;top:560px;width:9px;height:16px;background:#c8d0c8;"></div>
<svg style="left:642px;top:567px" width="5" height="3" viewBox="0 0 5 3" shape-rendering="crispEdges"><polygon points="0,0 5,0 2.5,3" fill="#303030"/></svg>
</div>
<div style="left:650px;top:180px;width:16px;height:386px;background:;background-image:conic-gradient(#fff 25%,#d4d0c8 0 50%,#fff 0 75%,#d4d0c8 0);background-size:2px 2px;"></div>
<div style="left:666px;top:179px;width:1px;height:388px;background:#404040;"></div>
<div style="left:650px;top:566px;width:17px;height:1px;background:#404040;"></div>
<div style="left:650px;top:180px;width:16px;height:16px;background:#d4d0c8;box-shadow:inset 1px 1px 0 #d4d0c8,inset -1px -1px 0 #404040,inset 2px 2px 0 #ffffff,inset -2px -2px 0 #808080"></div>
<svg style="left:654px;top:186px" width="7" height="4" viewBox="0 0 7 4" shape-rendering="crispEdges"><polygon points="0,4 3.5,0 7,4" fill="#404040"/></svg>
<div style="left:650px;top:196px;width:16px;height:197px;background:#d4d0c8;box-shadow:inset 1px 1px 0 #d4d0c8,inset -1px -1px 0 #404040,inset 2px 2px 0 #ffffff,inset -2px -2px 0 #808080"></div>
<div style="left:650px;top:550px;width:16px;height:16px;background:#d4d0c8;box-shadow:inset 1px 1px 0 #d4d0c8,inset -1px -1px 0 #404040,inset 2px 2px 0 #ffffff,inset -2px -2px 0 #808080"></div>
<svg style="left:654px;top:556px" width="7" height="4" viewBox="0 0 7 4" shape-rendering="crispEdges"><polygon points="0,0 7,0 3.5,4" fill="#404040"/></svg>
<div style="left:233px;top:575px;width:487px;height:16px;background:;background-image:conic-gradient(#fff 25%,#d4d0c8 0 50%,#fff 0 75%,#d4d0c8 0);background-size:2px 2px;"></div>
<div style="left:233px;top:575px;width:16px;height:16px;background:#d4d0c8;box-shadow:inset 1px 1px 0 #d4d0c8,inset -1px -1px 0 #404040,inset 2px 2px 0 #ffffff,inset -2px -2px 0 #808080"></div>
<svg style="left:239px;top:579px" width="4" height="7" viewBox="0 0 4 7" shape-rendering="crispEdges"><polygon points="4,0 4,7 0,3.5" fill="#404040"/></svg>
<div style="left:249px;top:575px;width:411px;height:16px;background:#d4d0c8;box-shadow:inset 1px 1px 0 #d4d0c8,inset -1px -1px 0 #404040,inset 2px 2px 0 #ffffff,inset -2px -2px 0 #808080"></div>
<div style="left:704px;top:575px;width:16px;height:16px;background:#d4d0c8;box-shadow:inset 1px 1px 0 #d4d0c8,inset -1px -1px 0 #404040,inset 2px 2px 0 #ffffff,inset -2px -2px 0 #808080"></div>
<svg style="left:710px;top:579px" width="4" height="7" viewBox="0 0 4 7" shape-rendering="crispEdges"><polygon points="0,0 4,3.5 0,7" fill="#404040"/></svg>
</div>
<div style="left:731px;top:67px;width:231px;height:528px;border:1px solid #ffffff"></div>
<div style="left:730px;top:66px;width:231px;height:528px;border:1px solid #808080"></div>
<div style="left:734px;top:70px;width:226px;height:18px;background:;background:linear-gradient(#f6f2e6 0,#f6f2e6 5.5%,#e9e9f7 5.6%,#e9e9f7 11%,#f0ece4 11.1%,#e8e4da 30%,#d2cec2 60%,#c2beb2 82%,#c4c0b4 100%)"></div>
<div style="left:734px;top:70px;width:1px;height:18px;background:#f8f8f4;"></div>
<div class="t" style="left:738.00px;top:71.11px;font-size:11px;line-height:16px;color:#50505a;font-weight:bold;letter-spacing:0.267px;font-family:'DejaVu Sans Condensed', 'Liberation Sans', sans-serif;">Help</div>
<svg style="left:944px;top:75px" width="8" height="7" viewBox="0 0 8 7" shape-rendering="crispEdges"><path d="M0,0h2v1h1v1h2v-1h1v-1h2v1h-1v1h-1v1h-1v1h1v1h1v1h1v1h-2v-1h-1v-1h-2v1h-1v1h-2v-1h1v-1h1v-1h1v-1h-1v-1h-1v-1h-1z" fill="#000"/></svg>
<div style="left:734px;top:88px;width:210px;height:505px;background:;background:linear-gradient(#fff 0,#fff 200px,#eff0f8 216px,#eff0f8 100%)"></div>
<div style="left:734px;top:88px;width:210px;height:40px;background:#36477f;"></div>
<div style="left:0;top:0;width:968px;height:623px;clip-path:inset(88px 24px 30px 734px)">
<div class="t" style="left:744.30px;top:92.83px;font-size:12px;line-height:16px;color:#fff;font-weight:bold;letter-spacing:-0.077px;font-family:'Liberation Sans', Arial, sans-serif;">Communicating with an Interface</div>
<div class="t" style="left:744.30px;top:107.83px;font-size:12px;line-height:16px;color:#fff;font-weight:bold;letter-spacing:-0.060px;font-family:'Liberation Sans', Arial, sans-serif;">Object</div>
<div class="t" style="left:744.00px;top:158.06px;font-size:11px;line-height:16px;color:#1c2054;letter-spacing:-0.106px;font-family:'Liberation Sans', Arial, sans-serif;">Communicate with your instrument</div>
<div class="t" style="left:744.00px;top:172.06px;font-size:11px;line-height:16px;color:#1c2054;letter-spacing:-0.024px;font-family:'Liberation Sans', Arial, sans-serif;">using an interface object. Save the</div>
<div class="t" style="left:744.00px;top:186.06px;font-size:11px;line-height:16px;color:#1c2054;letter-spacing:-0.100px;font-family:'Liberation Sans', Arial, sans-serif;">communication session to an M-file.</div>
<div class="t" style="left:737.50px;top:211.06px;font-size:11px;line-height:16px;color:#1c2054;font-family:'Liberation Sans', Arial, sans-serif;">1.</div>
<div class="t" style="left:754.00px;top:211.06px;font-size:11px;line-height:16px;color:#1c2054;letter-spacing:-0.059px;font-family:'Liberation Sans', Arial, sans-serif;">Click <b>Connect</b> to establish a</div>
<div class="t" style="left:754.00px;top:226.06px;font-size:11px;line-height:16px;color:#1c2054;letter-spacing:0.003px;font-family:'Liberation Sans', Arial, sans-serif;">connection with an instrument.</div>
<div class="t" style="left:737.50px;top:241.06px;font-size:11px;line-height:16px;color:#1c2054;font-family:'Liberation Sans', Arial, sans-serif;">2.</div>
<div class="t" style="left:754.00px;top:241.06px;font-size:11px;line-height:16px;color:#1c2054;letter-spacing:0.093px;font-family:'Liberation Sans', Arial, sans-serif;">Select the <b>Communicate</b> tab to</div>
<div class="t" style="left:754.00px;top:256.06px;font-size:11px;line-height:16px;color:#1c2054;letter-spacing:0.053px;font-family:'Liberation Sans', Arial, sans-serif;"><span style="color:#2028c8">specify the data to read and write.</span></div>
<div class="t" style="left:737.50px;top:271.06px;font-size:11px;line-height:16px;color:#1c2054;font-family:'Liberation Sans', Arial, sans-serif;">3.</div>
<div class="t" style="left:754.00px;top:271.06px;font-size:11px;line-height:16px;color:#1c2054;letter-spacing:0.087px;font-family:'Liberation Sans', Arial, sans-serif;">Select the <b>Configure</b> tab if you</div>
<div class="t" style="left:754.00px;top:286.06px;font-size:11px;line-height:16px;color:#1c2054;letter-spacing:-0.096px;font-family:'Liberation Sans', Arial, sans-serif;">need to change instrument</div>
<div class="t" style="left:754.00px;top:301.06px;font-size:11px;line-height:16px;color:#1c2054;letter-spacing:-0.106px;font-family:'Liberation Sans', Arial, sans-serif;">communication or object property</div>
<div class="t" style="left:754.00px;top:316.06px;font-size:11px;line-height:16px;color:#1c2054;letter-spacing:0.021px;font-family:'Liberation Sans', Arial, sans-serif;">settings. All the object's writable</div>
<div class="t" style="left:754.00px;top:331.06px;font-size:11px;line-height:16px;color:#1c2054;letter-spacing:-0.006px;font-family:'Liberation Sans', Arial, sans-serif;">properties are available for you to</div>
<div class="t" style="left:754.00px;top:346.06px;font-size:11px;line-height:16px;color:#1c2054;font-family:'Liberation Sans', Arial, sans-serif;">set.</div>
<div class="t" style="left:754.00px;top:361.06px;font-size:11px;line-height:16px;color:#1c2054;letter-spacing:-0.056px;font-family:'Liberation Sans', Arial, sans-serif;"><span style="color:#2028c8">Properties — Alphabetical List</span> in the</div>
<div class="t" style="left:754.00px;top:376.06px;font-size:11px;line-height:16px;color:#1c2054;letter-spacing:-0.125px;font-family:'Liberation Sans', Arial, sans-serif;">Instrument Control Toolbox User's</div>
<div class="t" style="left:754.00px;top:391.06px;font-size:11px;line-height:16px;color:#1c2054;letter-spacing:-0.139px;font-family:'Liberation Sans', Arial, sans-serif;">Guide documentation for complete</div>
<div class="t" style="left:754.00px;top:406.06px;font-size:11px;line-height:16px;color:#1c2054;letter-spacing:-0.045px;font-family:'Liberation Sans', Arial, sans-serif;">descriptions of all the object</div>
<div class="t" style="left:754.00px;top:421.06px;font-size:11px;line-height:16px;color:#1c2054;font-family:'Liberation Sans', Arial, sans-serif;">properties</div>
<div class="t" style="left:737.50px;top:436.06px;font-size:11px;line-height:16px;color:#1c2054;font-family:'Liberation Sans', Arial, sans-serif;">4.</div>
<div class="t" style="left:754.00px;top:436.06px;font-size:11px;line-height:16px;color:#1c2054;letter-spacing:0.066px;font-family:'Liberation Sans', Arial, sans-serif;">Select the <b>Session Log</b> tab and</div>
<div class="t" style="left:754.00px;top:451.06px;font-size:11px;line-height:16px;color:#1c2054;letter-spacing:0.140px;font-family:'Liberation Sans', Arial, sans-serif;">click <b>Save Session</b> to save your</div>
<div class="t" style="left:754.00px;top:466.06px;font-size:11px;line-height:16px;color:#1c2054;letter-spacing:-0.004px;font-family:'Liberation Sans', Arial, sans-serif;">instrument control session.</div>
<div class="t" style="left:754.00px;top:481.06px;font-size:11px;line-height:16px;color:#1c2054;letter-spacing:-0.100px;font-family:'Liberation Sans', Arial, sans-serif;">See for more information about</div>
<div class="t" style="left:754.00px;top:496.06px;font-size:11px;line-height:16px;color:#1c2054;letter-spacing:0.063px;font-family:'Liberation Sans', Arial, sans-serif;">saving your session.</div>
<div class="t" style="left:754.00px;top:511.06px;font-size:11px;line-height:16px;color:#1c2054;letter-spacing:0.085px;font-family:'Liberation Sans', Arial, sans-serif;">This step saves your current</div>
<div class="t" style="left:754.00px;top:526.06px;font-size:11px;line-height:16px;color:#1c2054;letter-spacing:0.083px;font-family:'Liberation Sans', Arial, sans-serif;">session in a file, which you can run</div>
<div class="t" style="left:754.00px;top:541.06px;font-size:11px;line-height:16px;color:#1c2054;letter-spacing:0.112px;font-family:'Liberation Sans', Arial, sans-serif;">from the MATLAB software to</div>
<div class="t" style="left:754.00px;top:556.06px;font-size:11px;line-height:16px;color:#1c2054;letter-spacing:0.090px;font-family:'Liberation Sans', Arial, sans-serif;">recreate your session</div>
<div class="t" style="left:754.00px;top:571.06px;font-size:11px;line-height:16px;color:#1c2054;letter-spacing:-0.106px;font-family:'Liberation Sans', Arial, sans-serif;">programmatically.</div>
<div class="t" style="left:737.50px;top:586.06px;font-size:11px;line-height:16px;color:#1c2054;font-family:'Liberation Sans', Arial, sans-serif;">5.</div>
<div class="t" style="left:754.00px;top:586.06px;font-size:11px;line-height:16px;color:#1c2054;letter-spacing:-0.014px;font-family:'Liberation Sans', Arial, sans-serif;">Click <b>Disconnect</b> to close the</div>
</div>
<div style="left:944px;top:88px;width:16px;height:505px;background:;background-image:conic-gradient(#fff 25%,#d4d0c8 0 50%,#fff 0 75%,#d4d0c8 0);background-size:2px 2px;"></div>
<div style="left:944px;top:88px;width:16px;height:16px;background:#d4d0c8;box-shadow:inset 1px 1px 0 #d4d0c8,inset -1px -1px 0 #404040,inset 2px 2px 0 #ffffff,inset -2px -2px 0 #808080"></div>
<svg style="left:948px;top:94px" width="7" height="4" viewBox="0 0 7 4" shape-rendering="crispEdges"><polygon points="0,4 3.5,0 7,4" fill="#404040"/></svg>
<div style="left:944px;top:104px;width:16px;height:429px;background:#d4d0c8;box-shadow:inset 1px 1px 0 #d4d0c8,inset -1px -1px 0 #404040,inset 2px 2px 0 #ffffff,inset -2px -2px 0 #808080"></div>
<div style="left:944px;top:577px;width:16px;height:16px;background:#d4d0c8;box-shadow:inset 1px 1px 0 #d4d0c8,inset -1px -1px 0 #404040,inset 2px 2px 0 #ffffff,inset -2px -2px 0 #808080"></div>
<svg style="left:948px;top:583px" width="7" height="4" viewBox="0 0 7 4" shape-rendering="crispEdges"><polygon points="0,0 7,0 3.5,4" fill="#404040"/></svg>
<svg style="left:951px;top:607px" width="13" height="13" viewBox="0 0 13 13" shape-rendering="crispEdges"><path d="M10,12 L12,10" stroke="#808080" stroke-width="1.4" shape-rendering="auto"/><path d="M8.8,12 L12,8.8" stroke="#fff" stroke-width="0.9" shape-rendering="auto"/><path d="M6,12 L12,6" stroke="#808080" stroke-width="1.4" shape-rendering="auto"/><path d="M4.8,12 L12,4.8" stroke="#fff" stroke-width="0.9" shape-rendering="auto"/><path d="M2,12 L12,2" stroke="#808080" stroke-width="1.4" shape-rendering="auto"/><path d="M0.8,12 L12,0.8" stroke="#fff" stroke-width="0.9" shape-rendering="auto"/></svg>
</div></body></html>
